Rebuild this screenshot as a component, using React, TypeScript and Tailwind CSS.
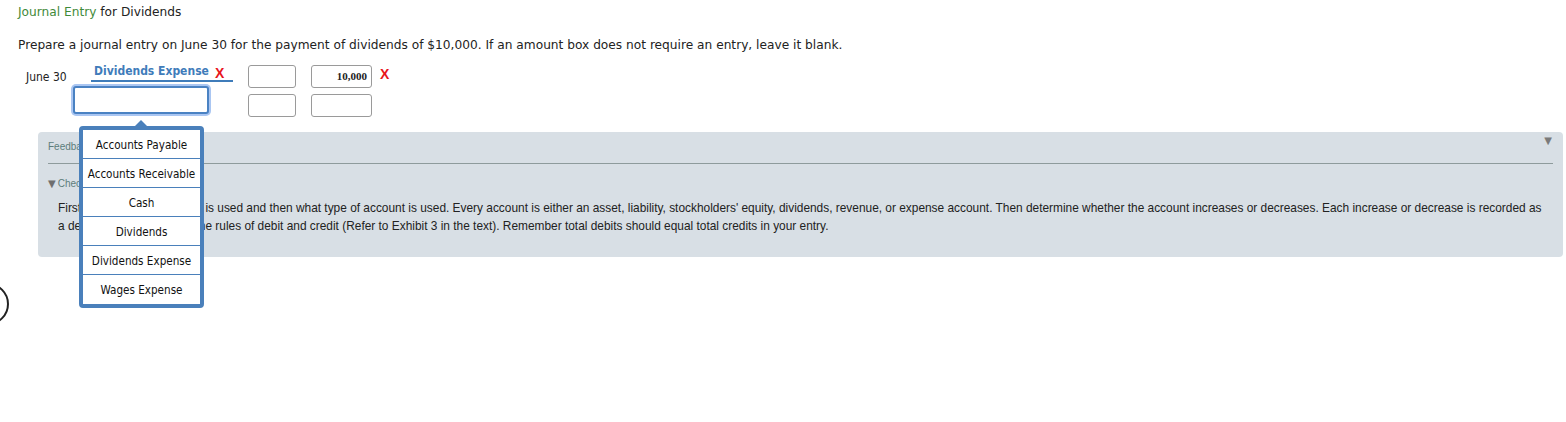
import React from "react";

const accounts = [
  "Accounts Payable",
  "Accounts Receivable",
  "Cash",
  "Dividends",
  "Dividends Expense",
  "Wages Expense",
];

function AmountBox({ value, wide }: { value?: string; wide?: boolean }) {
  return (
    <div
      className={`${wide ? "w-[61px]" : "w-[48px]"} h-[23px] border border-[#9a9a9a] rounded-[3px] bg-white flex items-center justify-end pr-[4px] text-[11px] font-bold text-[#222] [font-family:'Liberation_Serif',serif]`}
    >
      {value}
    </div>
  );
}

function RedX() {
  return (
    <span className="block text-[14px] font-bold text-[#e8141b] leading-none [font-family:'Liberation_Sans',Arial,sans-serif]">
      X
    </span>
  );
}

export default function App() {
  return (
    <div className="relative w-full h-[422px] bg-white overflow-hidden text-[#222] [font-family:'DejaVu_Sans',Verdana,sans-serif]">
      <div className="pl-[18px] pt-[5px]">
        <h1 className="text-[12.2px] leading-[14px] font-normal">
          <span className="text-[#3f8a3a]">Journal Entry</span> for Dividends
        </h1>
        <p className="mt-[19px] text-[12.2px] leading-[14px]">
          Prepare a journal entry on June 30 for the payment of dividends of $10,000. If an amount box does not require an entry, leave it blank.
        </p>

        {/* entry rows */}
        <div className="mt-[13px] [font-family:'DejaVu_Sans_Condensed','DejaVu_Sans',sans-serif]">
          <div className="flex items-start h-[21px]">
            <span className="ml-[8px] w-[65px] pt-[5px] text-[12px] leading-[14px]">June 30</span>
            <div className="w-[142px] h-[17px] border-b-2 border-[#3f7cba] flex items-start pl-[3px]">
              <span className="text-[12px] leading-[13px] font-bold text-[#3f7cba]">Dividends Expense</span>
              <span className="ml-[6px] mt-[1px]">
                <RedX />
              </span>
            </div>
            <div className="ml-[15px]">
              <AmountBox />
            </div>
            <div className="ml-[15px]">
              <AmountBox value="10,000" wide />
            </div>
            <span className="ml-[8px] mt-[2px]">
              <RedX />
            </span>
          </div>

          <div className="flex items-start">
            <div className="ml-[55px] w-[136px] h-[28px] rounded-[3px] border-2 border-[#4a82c3] bg-white shadow-[0_0_0_2px_#aac6f2]" />
            <div className="ml-[39px] mt-[8px]">
              <AmountBox />
            </div>
            <div className="ml-[15px] mt-[8px]">
              <AmountBox wide />
            </div>
          </div>
        </div>

        {/* feedback panel */}
        <div className="mt-[15px] ml-[20px] mr-[3px] h-[125px] rounded-[4px] bg-[#d8dfe5] pt-[9px] px-[10px]">
          <div className="flex items-start justify-between h-[12px]">
            <span className="text-[10px] leading-[12px] text-[#5d7d7b] [font-family:'Liberation_Sans',Arial,sans-serif]">
              Feedback
            </span>
            <span className="text-[10px] leading-[10px] -mt-[5px] text-[#7a7a7a] mr-[1px] [font-family:'DejaVu_Sans',sans-serif]">▼</span>
          </div>
          <div className="mt-[10px] border-t border-[#8e9b9c]" />
          <div className="mt-[14px] flex items-center gap-[2px] text-[10px] leading-[12px] text-[#5d7d7b] [font-family:'Liberation_Sans',Arial,sans-serif]">
            <span className="text-[10px] text-[#6f6f6f] [font-family:'DejaVu_Sans',sans-serif]">▼</span>
            <span>Check My Work</span>
          </div>
          <div className="mt-[9px] pl-[10px] text-[11.9px] leading-[18px] text-[#222] [font-family:'Liberation_Sans',Arial,sans-serif]">
            <p className="whitespace-nowrap">
              First determine the account is used and then what type of account is used. Every account is either an asset, liability, stockholders' equity, dividends, revenue, or expense account. Then determine whether the account increases or decreases. Each increase or decrease is recorded as
            </p>
            <p className="whitespace-nowrap">
              a debit or credit based on the rules of debit and credit (Refer to Exhibit 3 in the text). Remember total debits should equal total credits in your entry.
            </p>
          </div>
        </div>
      </div>

      {/* account picker popup */}
      <div className="absolute left-[79px] top-[120px] w-[125px] [font-family:'DejaVu_Sans_Condensed','DejaVu_Sans',sans-serif]">
        <div className="flex justify-center -mb-px">
          <div className="w-0 h-0 border-l-[7px] border-r-[7px] border-b-[7px] border-l-transparent border-r-transparent border-b-[#4a80bb] ml-[-2px]" />
        </div>
        <ul className="border-4 border-[#4a80bb] rounded-[4px] bg-white">
          {accounts.map((name, i) => (
            <li
              key={name}
              className={`h-[29px] pt-[3px] flex items-center justify-center text-[11.6px] text-[#111] ${i < accounts.length - 1 ? "border-b border-[#4a80bb]" : ""}`}
            >
              {name}
            </li>
          ))}
        </ul>
      </div>

      {/* edge of a round control cut off by the viewport */}
      <div className="absolute left-[-33px] top-[283px] w-[42px] h-[42px] rounded-full border-2 border-[#222]" />
    </div>
  );
}
